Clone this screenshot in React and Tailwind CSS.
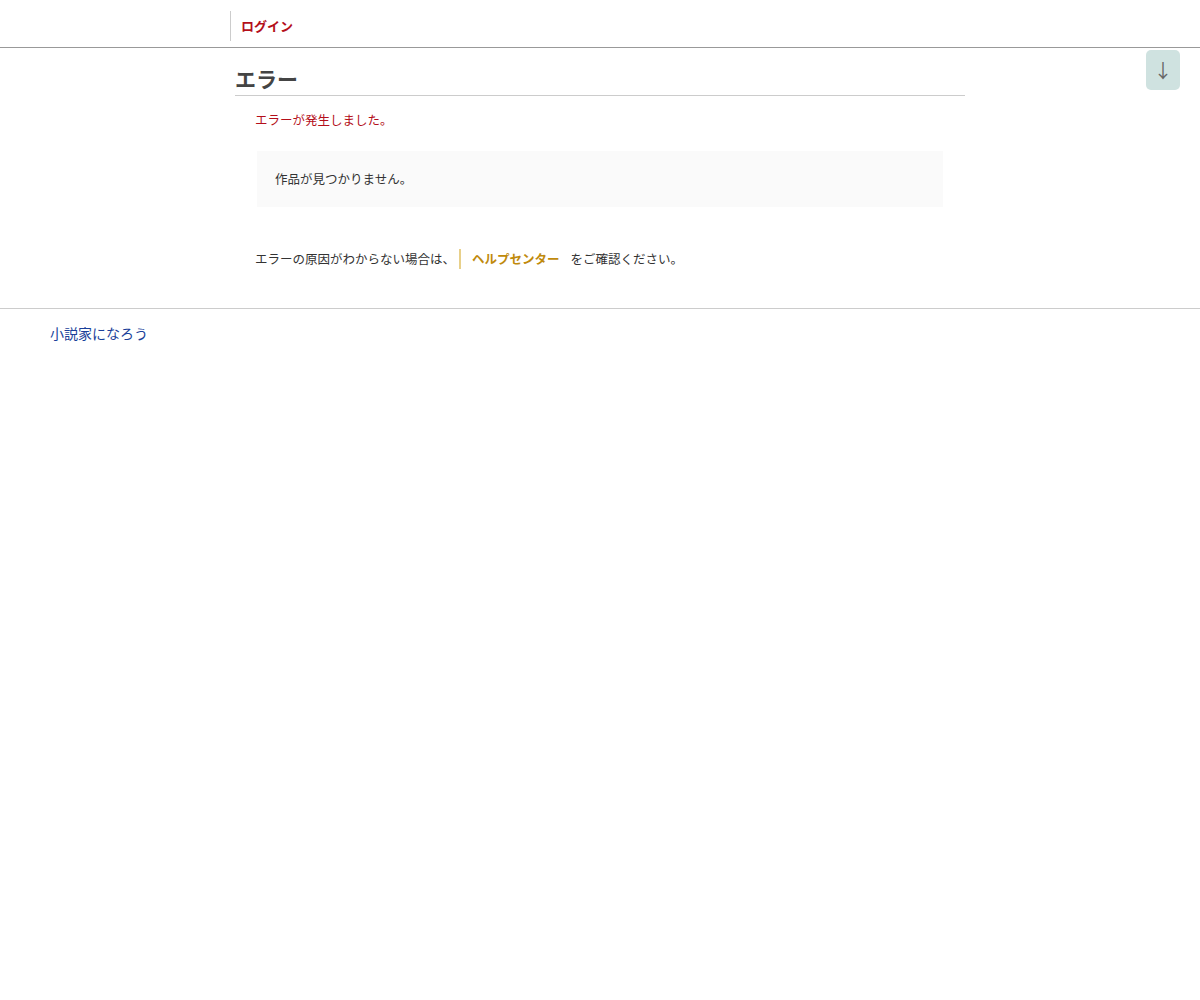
const font = { fontFamily: '"Noto Sans CJK JP", "Noto Sans", sans-serif' };

export default function App() {
  return (
    <div className="min-h-screen bg-white text-[#333]" style={font}>
      <header className="border-b border-[#999]">
        <div className="w-[740px] mx-auto h-[47px] pt-[4px] flex items-center">
          <div className="border-l border-[#ccc] h-[30px] flex items-center pl-[10px]">
            <a className="text-[13px] font-bold text-[#b40f1a]">ログイン</a>
          </div>
        </div>
      </header>

      <button className="absolute right-[20px] top-[50px] w-[34px] h-[40px] rounded-[5px] bg-[#cfe2e0] text-[#666] text-[19px] flex items-center justify-center">
        ↓
      </button>

      <main className="w-[730px] mx-auto pt-[15px] pb-[39px]">
        <h1 className="text-[21px] font-bold text-[#444] leading-[30px] pb-[2px] border-b border-[#ccc]">
          エラー
        </h1>
        <div className="px-[20px]">
          <p className="mt-[14px] text-[12.5px] leading-[20px] text-[#b40f1a]">
            エラーが発生しました。
          </p>
          <div className="mt-[21px] mx-[2px] bg-[#fafafa] h-[56px] flex items-center px-[18px]">
            <p className="text-[12.5px] text-[#333]">作品が見つかりません。</p>
          </div>
          <p className="mt-[42px] text-[12.5px] leading-[20px] flex items-center">
            <span>エラーの原因がわからない場合は、</span>
            <a className="ml-[4px] border-l-2 border-[#e8d08a] pl-[11px] pr-[11px] font-bold text-[#c08a0c] leading-[20px]">
              ヘルプセンター
            </a>
            <span>をご確認ください。</span>
          </p>
        </div>
      </main>

      <footer className="border-t border-[#ccc] pt-[11px] px-[50px]">
        <a className="text-[14px] text-[#1a3f9a]">小説家になろう</a>
      </footer>
    </div>
  );
}
